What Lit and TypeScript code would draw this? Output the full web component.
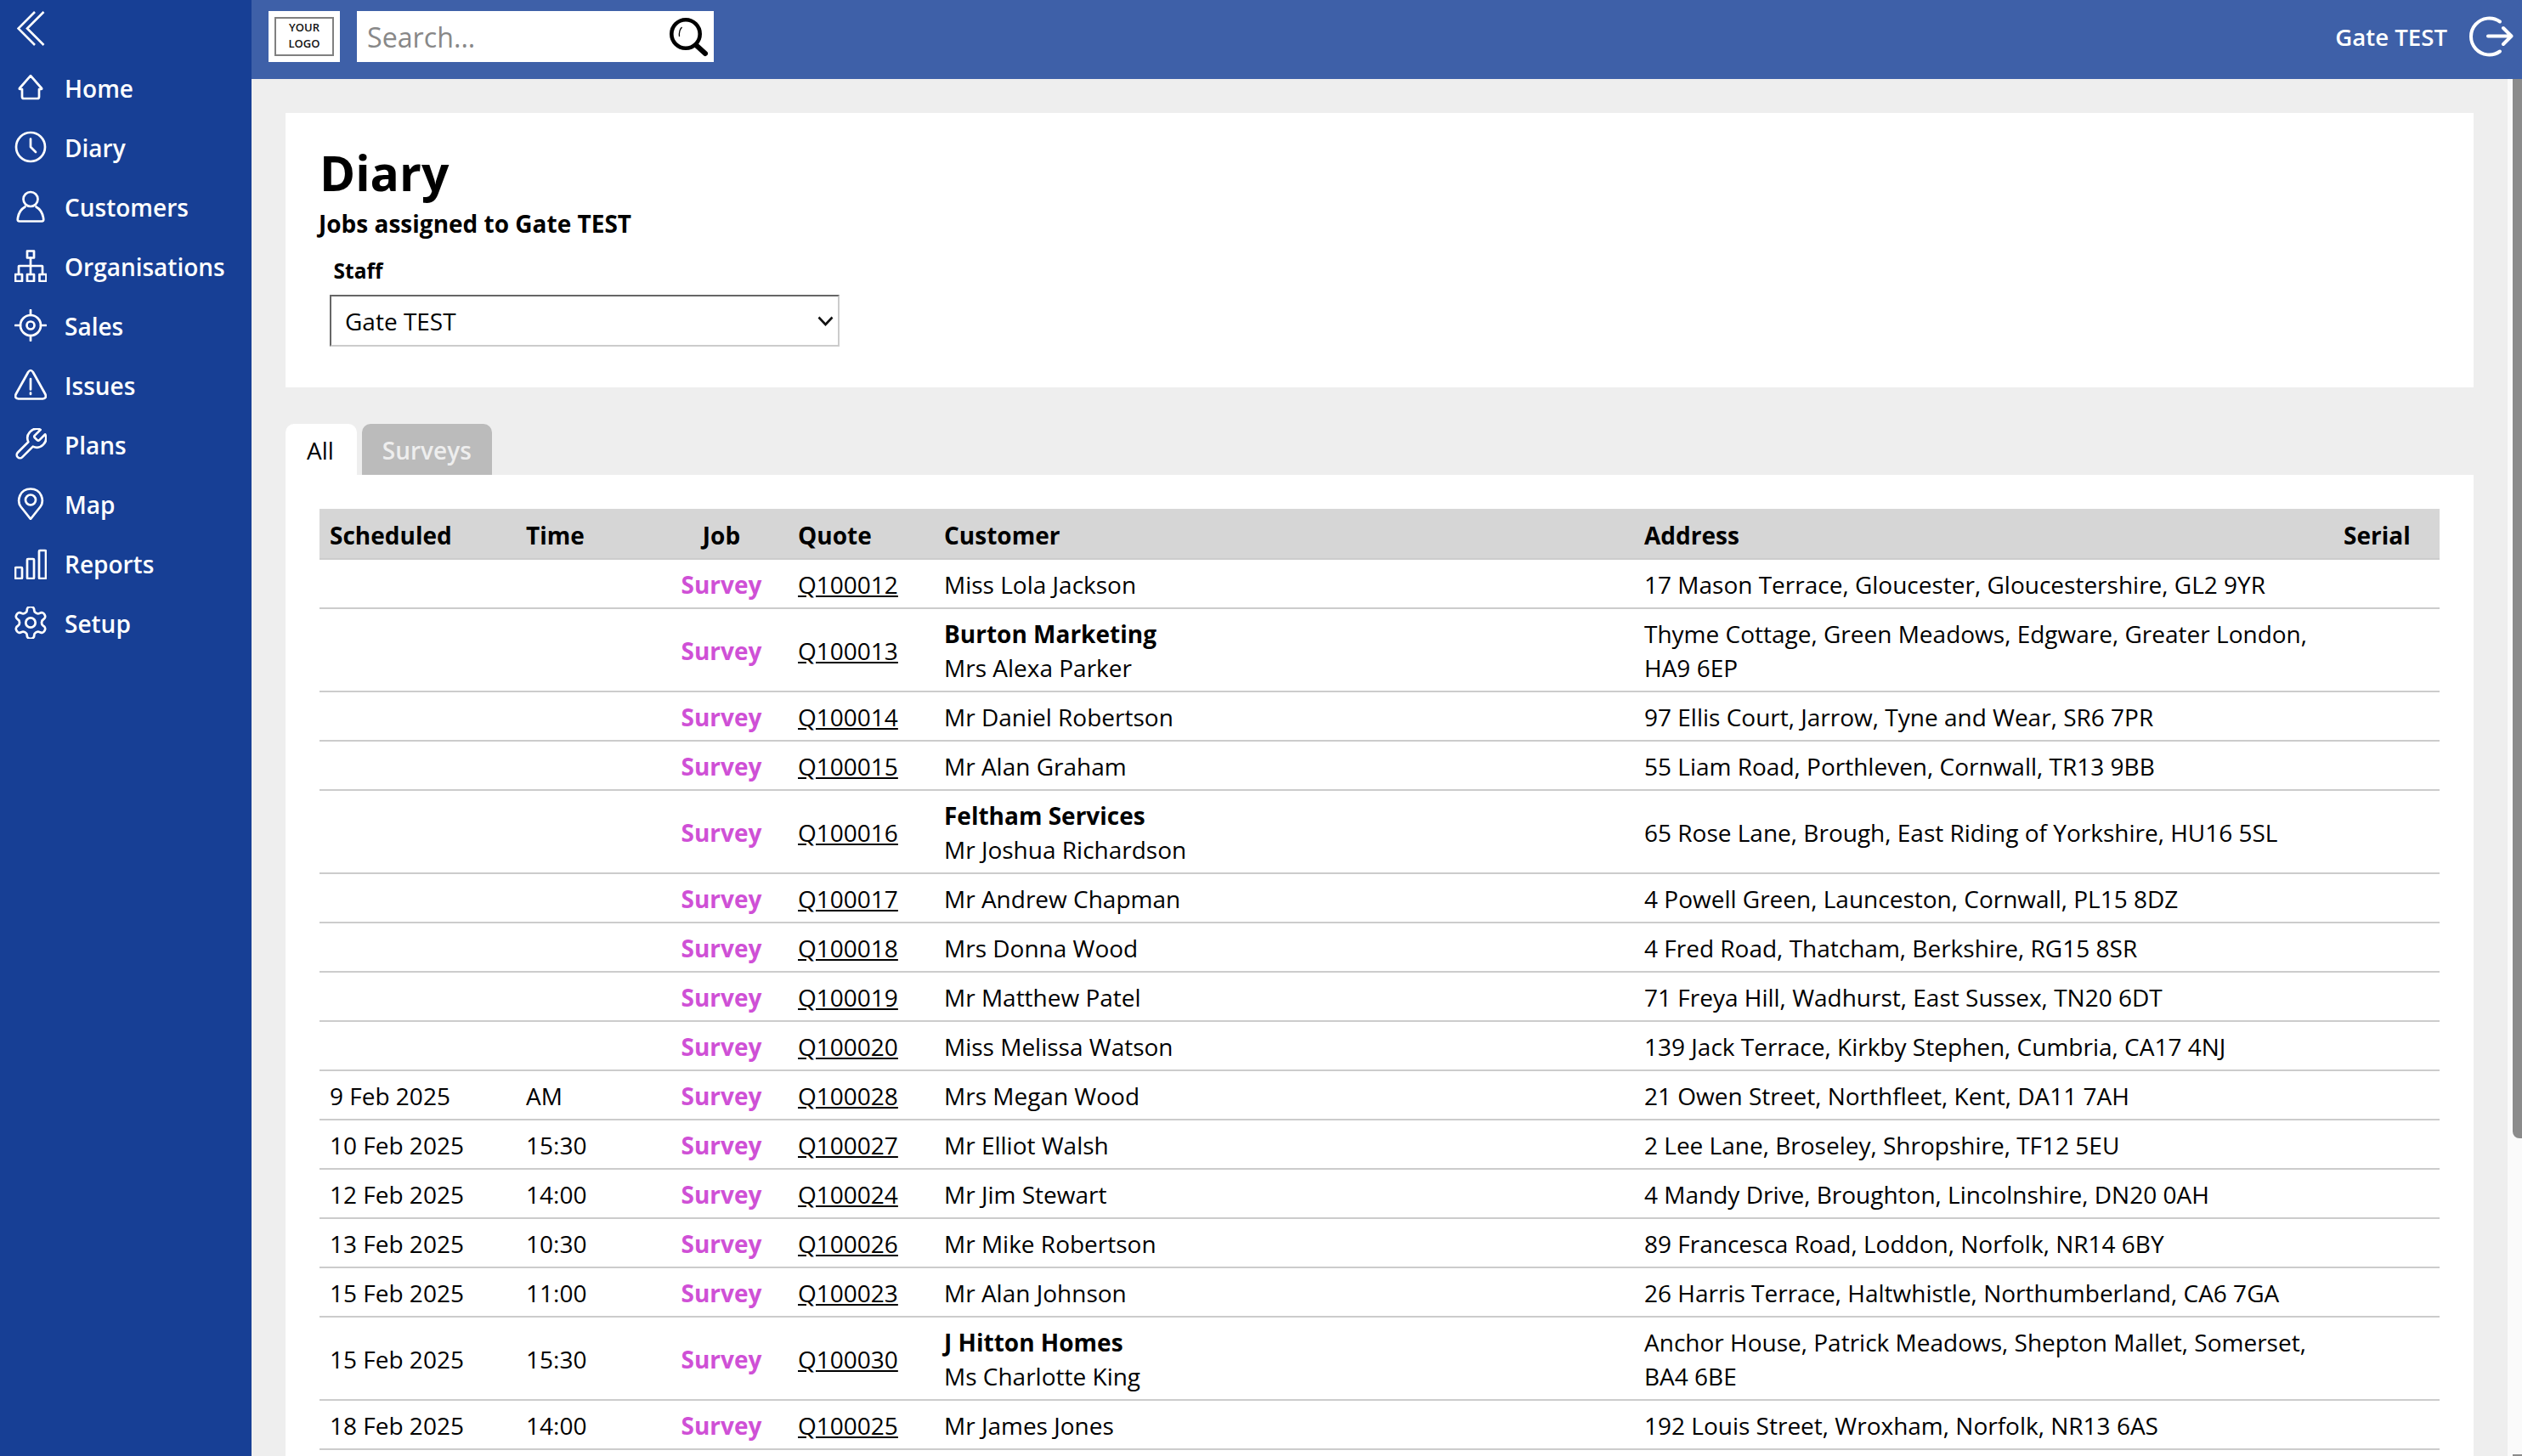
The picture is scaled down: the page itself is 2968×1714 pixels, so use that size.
import { LitElement, html, css, svg } from "lit";
import { customElement } from "lit/decorators.js";

type Row = { d?: string; t?: string; q: string; org?: string; c: string; a: string };

const rows: Row[] = [
  { q: "Q100012", c: "Miss Lola Jackson", a: "17 Mason Terrace, Gloucester, Gloucestershire, GL2 9YR" },
  { q: "Q100013", org: "Burton Marketing", c: "Mrs Alexa Parker", a: "Thyme Cottage, Green Meadows, Edgware, Greater London, HA9 6EP" },
  { q: "Q100014", c: "Mr Daniel Robertson", a: "97 Ellis Court, Jarrow, Tyne and Wear, SR6 7PR" },
  { q: "Q100015", c: "Mr Alan Graham", a: "55 Liam Road, Porthleven, Cornwall, TR13 9BB" },
  { q: "Q100016", org: "Feltham Services", c: "Mr Joshua Richardson", a: "65 Rose Lane, Brough, East Riding of Yorkshire, HU16 5SL" },
  { q: "Q100017", c: "Mr Andrew Chapman", a: "4 Powell Green, Launceston, Cornwall, PL15 8DZ" },
  { q: "Q100018", c: "Mrs Donna Wood", a: "4 Fred Road, Thatcham, Berkshire, RG15 8SR" },
  { q: "Q100019", c: "Mr Matthew Patel", a: "71 Freya Hill, Wadhurst, East Sussex, TN20 6DT" },
  { q: "Q100020", c: "Miss Melissa Watson", a: "139 Jack Terrace, Kirkby Stephen, Cumbria, CA17 4NJ" },
  { d: "9 Feb 2025", t: "AM", q: "Q100028", c: "Mrs Megan Wood", a: "21 Owen Street, Northfleet, Kent, DA11 7AH" },
  { d: "10 Feb 2025", t: "15:30", q: "Q100027", c: "Mr Elliot Walsh", a: "2 Lee Lane, Broseley, Shropshire, TF12 5EU" },
  { d: "12 Feb 2025", t: "14:00", q: "Q100024", c: "Mr Jim Stewart", a: "4 Mandy Drive, Broughton, Lincolnshire, DN20 0AH" },
  { d: "13 Feb 2025", t: "10:30", q: "Q100026", c: "Mr Mike Robertson", a: "89 Francesca Road, Loddon, Norfolk, NR14 6BY" },
  { d: "15 Feb 2025", t: "11:00", q: "Q100023", c: "Mr Alan Johnson", a: "26 Harris Terrace, Haltwhistle, Northumberland, CA6 7GA" },
  { d: "15 Feb 2025", t: "15:30", q: "Q100030", org: "J Hitton Homes", c: "Ms Charlotte King", a: "Anchor House, Patrick Meadows, Shepton Mallet, Somerset, BA4 6BE" },
  { d: "18 Feb 2025", t: "14:00", q: "Q100025", c: "Mr James Jones", a: "192 Louis Street, Wroxham, Norfolk, NR13 6AS" },
];

const gear = "M12.22 2h-.44a2 2 0 0 0-2 2v.18a2 2 0 0 1-1 1.73l-.43.25a2 2 0 0 1-2 0l-.15-.08a2 2 0 0 0-2.73.73l-.22.38a2 2 0 0 0 .73 2.73l.15.1a2 2 0 0 1 1 1.72v.51a2 2 0 0 1-1 1.74l-.15.09a2 2 0 0 0-.73 2.73l.22.38a2 2 0 0 0 2.73.73l.15-.08a2 2 0 0 1 2 0l.43.25a2 2 0 0 1 1 1.73V20a2 2 0 0 0 2 2h.44a2 2 0 0 0 2-2v-.18a2 2 0 0 1 1-1.73l.43-.25a2 2 0 0 1 2 0l.15.08a2 2 0 0 0 2.73-.73l.22-.39a2 2 0 0 0-.73-2.73l-.15-.08a2 2 0 0 1-1-1.74v-.5a2 2 0 0 1 1-1.74l.15-.09a2 2 0 0 0 .73-2.73l-.22-.38a2 2 0 0 0-2.73-.73l-.15.08a2 2 0 0 1-2 0l-.43-.25a2 2 0 0 1-1-1.73V4a2 2 0 0 0-2-2z";
const wrench = "M14.7 6.3a1 1 0 0 0 0 1.4l1.6 1.6a1 1 0 0 0 1.4 0l3.77-3.77a6 6 0 0 1-7.94 7.94l-6.91 6.91a2.12 2.12 0 0 1-3-3l6.91-6.91a6 6 0 0 1 7.94-7.94l-3.76 3.76z";

const icons: Record<string, unknown> = {
  Home: svg`<path d="M19 5.2 6 20q-.6 1 .7 1H9v9q0 2 2 2h16q2 0 2-2v-9h2.3q1.3 0 .7-1z"/>`,
  Diary: svg`<circle cx="19" cy="19" r="17"/><path d="M19 9.500V19l6 6"/>`,
  Customers: svg`<circle cx="19" cy="10.500" r="8.500"/><path d="M12.500 19.500C8 22 4.500 27.500 3.800 34q-.2 2.500 2 2.500h26.400q2.200 0 2-2.500c-.7-6.500-4.200-12-8.700-14.500"/>`,
  Organisations: svg`<rect x="15" y="1.500" width="8" height="8"/><path d="M19 9.500V19M5 29v-9.500q0-.5.5-.5h27q.5 0 .5.5V29M19 19v10"/><rect x="1" y="29" width="8" height="8"/><rect x="15" y="29" width="8" height="8"/><rect x="29.500" y="29" width="8" height="8"/>`,
  Sales: svg`<circle cx="19" cy="19" r="12"/><circle cx="19" cy="19" r="4.500"/><path d="M19 1v6M19 31v6M1 19h6M31 19h6"/>`,
  Issues: svg`<path d="M16.200 4 1.700 30q-2 5 3 5.500h28.600q5-.5 3-5.500L21.800 4q-2.800-4-5.600 0z"/><path d="M19 12v12.500M19 28.500v1.500"/>`,
  Map: svg`<path d="M19 37 7.500 22.500C2.500 15.500 6 1.500 19 1.500S35.500 15.500 30.500 22.500z"/><circle cx="19" cy="14.500" r="6"/>`,
  Reports: svg`<rect x="1" y="24" width="8" height="13" rx="1"/><rect x="15" y="14" width="8" height="23" rx="1"/><rect x="29" y="4" width="8" height="33" rx="1"/>`,
};

@customElement("app-root")
export class AppRoot extends LitElement {
  static styles = css`
    :host {
      display: flex;
      height: 100vh;
      overflow: hidden;
      font-family: "Open Sans", "Noto Sans", sans-serif;
      font-size: 28px;
      line-height: 40px;
      color: #000;
      background: #eee;
    }
    * { box-sizing: border-box; }
    .side {
      width: 296px;
      flex: none;
      background: #173f95;
      color: #fff;
      display: flex;
      flex-direction: column;
    }
    .collapse { height: 68px; padding: 13px 0 0 20px; }
    .collapse svg { display: block; width: 34px; height: 42px; fill: none; stroke: #fff; stroke-width: 2.600; }
    .nav { display: flex; align-items: center; height: 70px; padding-left: 17px; gap: 21px; font-weight: 600; }
    .nav span { padding-top: 1px; }
    .nav svg { width: 38px; height: 38px; flex: none; fill: none; stroke: #fff; stroke-width: 2.700; stroke-linecap: round; stroke-linejoin: round; }
    .nav svg.lu { stroke-width: 1.450; }
    .main { flex: 1; min-width: 0; display: flex; flex-direction: column; }
    .top {
      height: 93px;
      flex: none;
      background: #3e60a8;
      display: flex;
      align-items: center;
      padding: 0 10px 7px 20px;
    }
    .logo { width: 84px; height: 60px; background: #fff; padding: 7px; flex: none; }
    .logo div {
      width: 100%; height: 100%;
      border: 2px solid #808080;
      font-size: 13px; line-height: 19px; font-weight: 600;
      text-align: center; color: #111;
      padding-top: 1px;
    }
    .search { width: 420px; height: 60px; margin-left: 20px; background: #fff; display: flex; align-items: center; padding: 0 4px 0 12px; }
    .search input {
      flex: 1; min-width: 0; border: 0; outline: 0; padding: 0; background: transparent;
      font: 400 32.200px "Open Sans", sans-serif; color: #000;
    }
    .search input::placeholder { color: #888; opacity: 1; }
    .search svg { width: 52px; height: 52px; flex: none; fill: none; stroke: #000; }
    .user { margin-left: auto; color: #fff; font-weight: 600; font-size: 27.600px; }
    .logout { width: 52px; height: 50px; margin-left: 26px; flex: none; fill: none; stroke: #fff; stroke-width: 4; stroke-linecap: round; stroke-linejoin: round; }
    .body { flex: 1; min-height: 0; display: flex; }
    .content { flex: 1; min-width: 0; padding: 40px; overflow: hidden; }
    .bar { width: 17px; flex: none; background: #fafafa; padding-left: 6px; display: flex; flex-direction: column; }
    .thumb { height: 1247px; background: #8b8b8b; border-radius: 0 0 0 8px; }
    .nub { margin-top: auto; height: 2px; background: #8b8b8b; }
    .head { background: #fff; height: 323px; padding: 38px 40px 0 40px; }
    h1 { margin: 0; font-size: 57px; line-height: 64px; font-weight: 700; }
    .sub { font-weight: 700; margin-top: 8px; margin-left: -1px; }
    .field { padding-left: 13px; margin-top: 19px; }
    label { display: block; font-weight: 700; font-size: 24.500px; line-height: 34px; padding-left: 3.500px; }
    .selwrap { position: relative; width: 600px; height: 61px; margin-top: 11px; margin-left: -1px; }
    select {
      appearance: none;
      width: 100%; height: 100%;
      background: #fff;
      border-width: 2px;
      border-style: solid;
      border-color: #666 #ccc #ccc #666;
      border-radius: 0;
      padding: 1px 16px 0;
      font: 400 28px "Open Sans", sans-serif;
      color: #000;
    }
    .selwrap svg { position: absolute; right: 6px; top: 24px; width: 20px; height: 15px; fill: none; stroke: #111; stroke-width: 2.600; pointer-events: none; }
    .tabs { display: flex; gap: 6px; margin-top: 43px; height: 60px; }
    .tab { height: 60px; border-radius: 10px 10px 0 0; display: flex; align-items: center; padding: 1px 24px 0; }
    .tab.on { background: #fff; padding-left: 25px; padding-right: 27px; }
    .tab.off { background: #bbb; color: #eee; font-weight: 600; }
    .panel { background: #fff; padding: 40px; }
    table { width: 100%; border-collapse: separate; border-spacing: 0; table-layout: fixed; }
    th, td { padding: 8px 12px; border-bottom: 2px solid #ccc; text-align: left; font-weight: 400; vertical-align: middle; }
    td { padding-top: 8.500px; padding-bottom: 7.500px; }
    th { background: #d6d6d6; font-weight: 700; padding: 11px 12px 7px; }
    .job { text-align: center; }
    td.job { color: #cf50d6; font-weight: 700; }
    a { color: #000; text-decoration: underline; }
    b { font-weight: 700; display: block; }
  `;

  render() {
    const navs = ["Home", "Diary", "Customers", "Organisations", "Sales", "Issues", "Plans", "Map", "Reports", "Setup"];
    return html`
      <aside class="side">
        <div class="collapse">
          <svg viewBox="0 0 34 42"><path d="M21 1 1.500 20.500 21 40M31.500 1 12 20.500 31.500 40"/></svg>
        </div>
        ${navs.map((n) => html`<div class="nav">${this.icon(n)}<span>${n}</span></div>`)}
      </aside>
      <div class="main">
        <header class="top">
          <div class="logo"><div>YOUR<br />LOGO</div></div>
          <div class="search">
            <input placeholder="Search..." />
            <svg viewBox="0 0 52 52">
              <circle cx="23" cy="23" r="16.700" stroke-width="4.600"/>
              <path d="M35 36 46 46" stroke-width="6" stroke-linecap="round"/>
              <path d="M15.500 26q-.8-7 3-11" stroke-width="1.300"/>
            </svg>
          </div>
          <div class="user">Gate TEST</div>
          <svg class="logout" viewBox="0 0 52 50">
            <path d="M36 7.500A21.500 21.500 0 1 0 36 42.500"/>
            <path d="M22 24.500H49M40 15l9.500 9.500L40 34"/>
          </svg>
        </header>
        <div class="body">
          <div class="content">
            <section class="head">
              <h1>Diary</h1>
              <div class="sub">Jobs assigned to Gate TEST</div>
              <div class="field">
                <label>Staff</label>
                <div class="selwrap">
                  <select><option>Gate TEST</option></select>
                  <svg viewBox="0 0 20 15"><path d="M1.500 2.500 9.500 11l8-8.500"/></svg>
                </div>
              </div>
            </section>
            <div class="tabs">
              <div class="tab on">All</div>
              <div class="tab off">Surveys</div>
            </div>
            <section class="panel">
              <table>
                <colgroup>
                  <col style="width:231px" /><col style="width:164px" /><col style="width:156px" /><col style="width:172px" /><col style="width:824px" /><col style="width:823px" /><col />
                </colgroup>
                <thead>
                  <tr><th>Scheduled</th><th>Time</th><th class="job">Job</th><th>Quote</th><th>Customer</th><th>Address</th><th>Serial</th></tr>
                </thead>
                <tbody>
                  ${rows.map(
                    (r) => html`<tr>
                      <td>${r.d ?? ""}</td>
                      <td>${r.t ?? ""}</td>
                      <td class="job">Survey</td>
                      <td><a href="#">${r.q}</a></td>
                      <td>${r.org ? html`<b>${r.org}</b>` : ""}${r.c}</td>
                      <td>${r.a}</td>
                      <td></td>
                    </tr>`
                  )}
                </tbody>
              </table>
            </section>
          </div>
          <div class="bar"><div class="thumb"></div><div class="nub"></div></div>
        </div>
      </div>
    `;
  }

  icon(n: string) {
    if (n === "Plans") return html`<svg class="lu" viewBox="1.500 1.500 21 21"><path d="${wrench}"/></svg>`;
    if (n === "Setup") return html`<svg class="lu" viewBox="2 2 20 20"><path d="${gear}"/><circle cx="12" cy="12" r="3"/></svg>`;
    return html`<svg viewBox="0 0 38 38">${icons[n]}</svg>`;
  }
}
